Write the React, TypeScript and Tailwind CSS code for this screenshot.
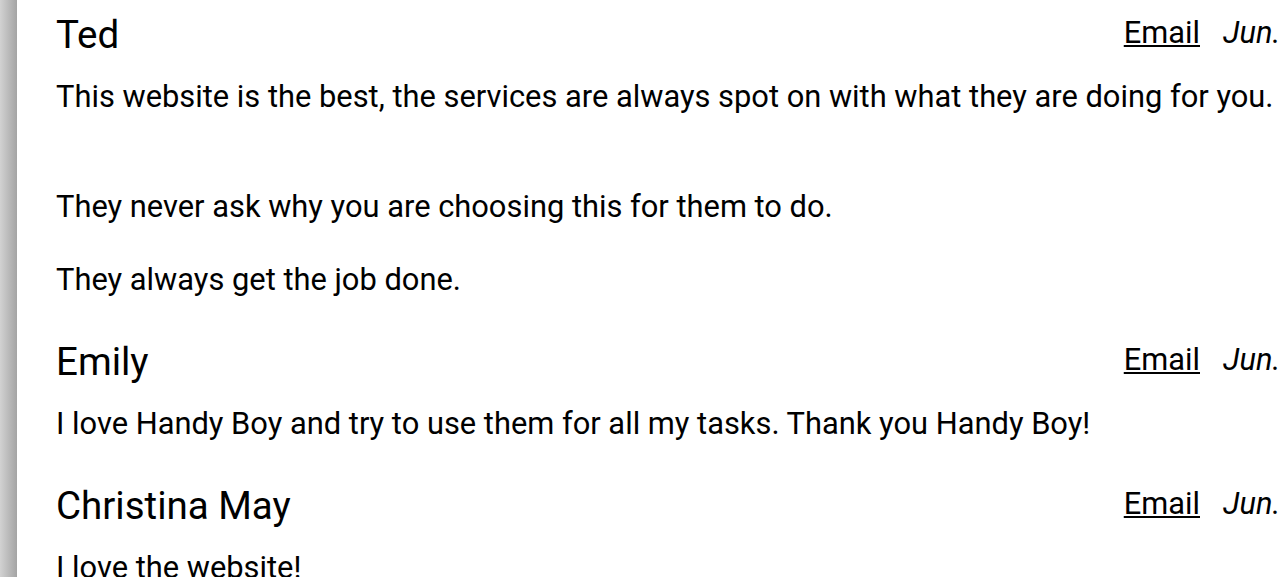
import React from "react";

type Review = {
  name: string;
  date: string;
  paragraphs: { text: string; spaced?: boolean }[];
};

const reviews: Review[] = [
  {
    name: "Ted",
    date: "Jun. 12, 2020",
    paragraphs: [
      { text: "This website is the best, the services are always spot on with what they are doing for you." },
      { text: "They never ask why you are choosing this for them to do.", spaced: true },
      { text: "They always get the job done." },
    ],
  },
  {
    name: "Emily",
    date: "Jun. 10, 2020",
    paragraphs: [{ text: "I love Handy Boy and try to use them for all my tasks. Thank you Handy Boy!" }],
  },
  {
    name: "Christina May",
    date: "Jun. 8, 2020",
    paragraphs: [{ text: "I love the website!" }],
  },
];

function ReviewItem({ review }: { review: Review }) {
  return (
    <div className="flex flex-col">
      <div className="flex items-start">
        <h3 className="flex-1 text-[38.5px] leading-[44px] font-normal">{review.name}</h3>
        <a href="#" className="pt-[2px] text-[30.8px] leading-[36px] underline decoration-2 underline-offset-[2px]">
          Email
        </a>
        <span className="ml-[23px] w-[57px] shrink-0 whitespace-nowrap pt-[2px] text-[30.8px] leading-[36px] italic">
          {review.date}
        </span>
      </div>
      <div className="mt-[20px] flex flex-col gap-[33px]">
        {review.paragraphs.map((p, i) => (
          <p key={i} className={p.spaced ? "mt-[37px] text-[30.85px] leading-[40px]" : "text-[30.85px] leading-[40px]"}>
            {p.text}
          </p>
        ))}
      </div>
    </div>
  );
}

export default function App() {
  return (
    <div
      className="flex h-[577px] w-[1280px] overflow-hidden bg-white text-black"
      style={{ fontFamily: "Roboto, 'Liberation Sans', sans-serif" }}
    >
      <div className="w-[17px] shrink-0 bg-gradient-to-r from-[#d2d2d2] to-[#a4a4a4]" />
      <div className="flex flex-1 flex-col gap-[40px] pl-[39px] pt-[13px]">
        {reviews.map((r) => (
          <ReviewItem key={r.name} review={r} />
        ))}
      </div>
    </div>
  );
}
